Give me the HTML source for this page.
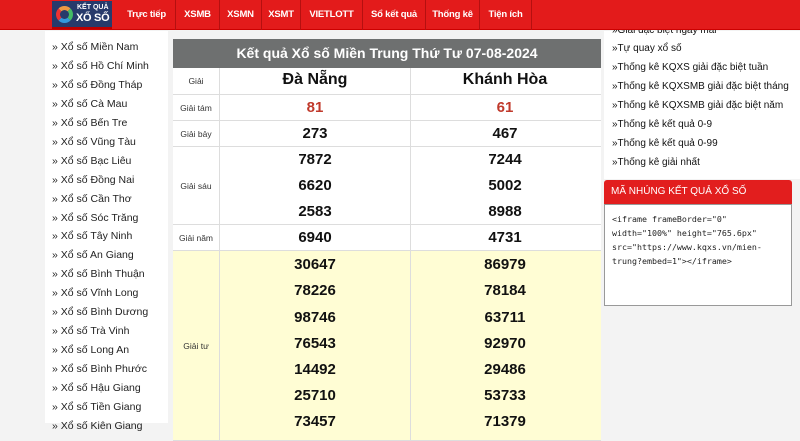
<!DOCTYPE html>
<html><head><meta charset="utf-8"><style>
*{margin:0;padding:0;box-sizing:border-box}
body{width:800px;height:423px;overflow:hidden;background:#f3f3f3;font-family:"Liberation Sans",Arial,sans-serif;position:relative}
.hdr{position:absolute;left:0;top:0;width:800px;height:30px;background:#e31b1b;border-bottom:1px solid #c00}
.logo{position:absolute;left:52px;top:1px;width:60px;height:28px;background:#273a6b;border-bottom:2px solid #b00;z-index:2;overflow:hidden}
.logo .c{position:absolute;left:4px;top:5px;width:17px;height:17px;border-radius:50%;border:4px solid;border-color:#e94 #4b6 #39d #e33}
.logo .t1{position:absolute;left:25px;top:3px;font-size:7px;font-weight:bold;color:#fff;white-space:nowrap}
.logo .t2{position:absolute;left:24px;top:11px;font-size:11px;font-weight:bold;color:#fff;white-space:nowrap;letter-spacing:-0.3px}
.nav{position:absolute;top:0;height:30px;line-height:30px;color:#fff;font-weight:bold;font-size:9.5px;letter-spacing:-0.2px;border-right:1px solid #b51010;white-space:nowrap;z-index:2;text-align:center}
.left{position:absolute;left:45px;top:31px;width:123px;height:392px;background:#fff}
.left div{position:absolute;left:7px;font-size:10.5px;color:#222;white-space:nowrap}
.tbl{position:absolute;left:173px;top:39px;width:428px}
.th{height:29px;background:#6e7070;color:#fff;font-weight:bold;font-size:14px;text-align:center;line-height:29px}
.row{position:relative;border-bottom:1px solid #ddd;background:#fff}
.row .l{position:absolute;left:0;top:0;bottom:0;width:47px;border-right:1px solid #ddd;font-size:8.5px;color:#333;display:flex;align-items:center;justify-content:center}
.row .m{position:absolute;left:237px;top:0;bottom:0;border-left:1px solid #ddd}
.n{position:absolute;font-weight:bold;font-size:15px;color:#111;width:190px;text-align:center}
.right{position:absolute;left:604px;top:31px;width:196px;height:148px;background:#fff}
.right div{position:absolute;left:8px;font-size:10px;color:#111;white-space:nowrap}
.emb{position:absolute;left:604px;top:180px;width:188px;height:24px;background:#e21e1e;color:#fff;font-size:10px;line-height:24px;padding-left:7px;border-radius:3px 3px 0 0}
.ta{position:absolute;left:604px;top:204px;width:188px;height:102px;background:#fff;border:1px solid #999;font-family:"DejaVu Sans Mono","Liberation Mono",monospace;font-size:8.3px;line-height:14px;padding:7px 0 0 7px;color:#222;white-space:nowrap}
</style></head><body>
<div class="left">
<div style="top:10px">» Xổ số Miền Nam</div>
<div style="top:29px">» Xổ số Hồ Chí Minh</div>
<div style="top:48px">» Xổ số Đồng Tháp</div>
<div style="top:67px">» Xổ số Cà Mau</div>
<div style="top:86px">» Xổ số Bến Tre</div>
<div style="top:105px">» Xổ số Vũng Tàu</div>
<div style="top:124px">» Xổ số Bạc Liêu</div>
<div style="top:143px">» Xổ số Đồng Nai</div>
<div style="top:162px">» Xổ số Cần Thơ</div>
<div style="top:181px">» Xổ số Sóc Trăng</div>
<div style="top:199px">» Xổ số Tây Ninh</div>
<div style="top:218px">» Xổ số An Giang</div>
<div style="top:237px">» Xổ số Bình Thuận</div>
<div style="top:256px">» Xổ số Vĩnh Long</div>
<div style="top:275px">» Xổ số Bình Dương</div>
<div style="top:294px">» Xổ số Trà Vinh</div>
<div style="top:313px">» Xổ số Long An</div>
<div style="top:332px">» Xổ số Bình Phước</div>
<div style="top:351px">» Xổ số Hậu Giang</div>
<div style="top:370px">» Xổ số Tiền Giang</div>
<div style="top:389px">» Xổ số Kiên Giang</div>
</div>
<div class="tbl">
<div class="th">Kết quả Xổ số Miền Trung Thứ Tư 07-08-2024</div>
<div class="row" style="height:27px"><div class="l">Giải</div><div class="m"></div>
<div class="n" style="left:47px;top:3px;font-size:16px">Đà Nẵng</div><div class="n" style="left:237px;top:3px;font-size:16px">Khánh Hòa</div></div>
<div class="row" style="height:26px"><div class="l">Giải tám</div><div class="m"></div>
<div class="n" style="left:47px;top:4px;color:#c0392b">81</div><div class="n" style="left:237px;top:4px;color:#c0392b">61</div></div>
<div class="row" style="height:26px"><div class="l">Giải bảy</div><div class="m"></div>
<div class="n" style="left:47px;top:4px">273</div><div class="n" style="left:237px;top:4px">467</div></div>
<div class="row" style="height:78px"><div class="l">Giải sáu</div><div class="m"></div>
<div class="n" style="left:47px;top:4px">7872</div><div class="n" style="left:237px;top:4px">7244</div>
<div class="n" style="left:47px;top:30px">6620</div><div class="n" style="left:237px;top:30px">5002</div>
<div class="n" style="left:47px;top:56px">2583</div><div class="n" style="left:237px;top:56px">8988</div></div>
<div class="row" style="height:26px"><div class="l">Giải năm</div><div class="m"></div>
<div class="n" style="left:47px;top:4px">6940</div><div class="n" style="left:237px;top:4px">4731</div></div>
<div class="row" style="height:190px;background:#fffdd4"><div class="l">Giải tư</div><div class="m"></div>
<div class="n" style="left:47px;top:5px">30647</div><div class="n" style="left:237px;top:5px">86979</div>
<div class="n" style="left:47px;top:31px">78226</div><div class="n" style="left:237px;top:31px">78184</div>
<div class="n" style="left:47px;top:58px">98746</div><div class="n" style="left:237px;top:58px">63711</div>
<div class="n" style="left:47px;top:84px">76543</div><div class="n" style="left:237px;top:84px">92970</div>
<div class="n" style="left:47px;top:110px">14492</div><div class="n" style="left:237px;top:110px">29486</div>
<div class="n" style="left:47px;top:136px">25710</div><div class="n" style="left:237px;top:136px">53733</div>
<div class="n" style="left:47px;top:162px">73457</div><div class="n" style="left:237px;top:162px">71379</div></div>
</div>
<div class="right">
<div style="top:-6px">»Giải đặc biệt ngày mai</div>
<div style="top:12px">»Tự quay xổ số</div>
<div style="top:31px">»Thống kê KQXS giải đặc biệt tuần</div>
<div style="top:50px">»Thống kê KQXSMB giải đặc biệt tháng</div>
<div style="top:69px">»Thống kê KQXSMB giải đặc biệt năm</div>
<div style="top:88px">»Thống kê kết quả 0-9</div>
<div style="top:107px">»Thống kê kết quả 0-99</div>
<div style="top:126px">»Thống kê giải nhất</div>
</div>
<div class="hdr"></div>
<div class="logo"><div class="c"></div><div class="t1">KẾT QUẢ</div><div class="t2">XỔ SỐ</div></div>
<div class="nav" style="left:118px;width:58px">Trực tiếp</div>
<div class="nav" style="left:176px;width:44px">XSMB</div>
<div class="nav" style="left:220px;width:42px">XSMN</div>
<div class="nav" style="left:262px;width:39px">XSMT</div>
<div class="nav" style="left:301px;width:62px">VIETLOTT</div>
<div class="nav" style="left:363px;width:63px">Sổ kết quả</div>
<div class="nav" style="left:426px;width:54px">Thống kê</div>
<div class="nav" style="left:480px;width:52px">Tiện ích</div>
<div class="emb">MÃ NHÚNG KẾT QUẢ XỔ SỐ</div>
<div class="ta">&lt;iframe frameBorder="0"<br>width="100%" height="765.6px"<br>src="https://www.kqxs.vn/mien-<br>trung?embed=1"&gt;&lt;/iframe&gt;</div>
</body></html>
